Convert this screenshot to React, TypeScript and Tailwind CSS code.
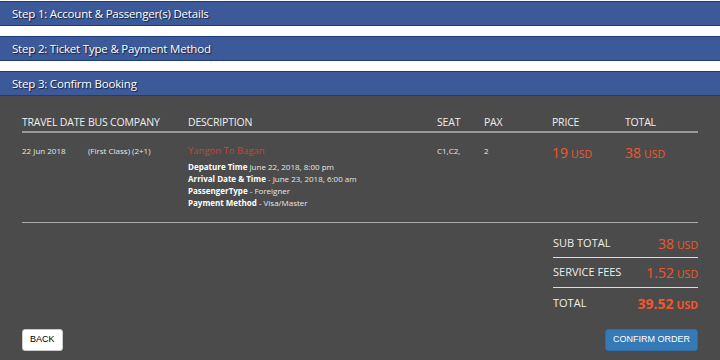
import React from "react";

const Bar = ({ label }: { label: string }) => (
  <div className="h-[25px] bg-[#3c5a99] border-y border-[#1f3b78] flex items-center pl-[12px] text-[11.5px] tracking-[-0.2px] text-white [text-shadow:1px_1px_1px_rgba(0,0,0,0.7)]">
    {label}
  </div>
);

const Money = ({ n, bold = false }: { n: string; bold?: boolean }) => (
  <span className={`text-[#f0582b] ${bold ? "font-bold" : ""}`}>
    <span className="text-[14px]">{n}</span>
    <span className="text-[10.5px] ml-[3px]">USD</span>
  </span>
);

export default function App() {
  return (
    <div className="w-[720px] h-[360px] overflow-hidden bg-white" style={{ fontFamily: '"Open Sans", "Noto Sans", sans-serif' }}>
      <div className="pt-[1px]">
        <Bar label="Step 1: Account & Passenger(s) Details" />
        <div className="h-[10px]" />
        <Bar label="Step 2: Ticket Type & Payment Method" />
        <div className="h-[10px]" />
        <Bar label="Step 3: Confirm Booking" />
      </div>
      <div className="bg-[#4b4b4b] h-[265px] px-[22px] pt-[18px] text-[#eeeeee]">
        <div className="grid grid-cols-[66px_100px_249px_47px_68px_73px_73px] text-[10.5px] leading-[16px] border-b-2 border-[#999999] pb-[1px] tracking-[-0.2px]">
          <div className="whitespace-nowrap">TRAVEL DATE</div>
          <div>BUS COMPANY</div>
          <div>DESCRIPTION</div>
          <div>SEAT</div>
          <div>PAX</div>
          <div>PRICE</div>
          <div>TOTAL</div>
        </div>
        <div className="grid grid-cols-[66px_100px_249px_47px_68px_73px_73px] text-[8px] leading-[12px] pt-[12px] pb-[13px] border-b border-[#aaaaaa] text-[#e6e6e6]">
          <div>22 Jun 2018</div>
          <div>(First Class) (2+1)</div>
          <div>
            <div className="text-[#c8452d] text-[9.5px] mb-[4px]">Yangon To Bagan</div>
            <div><span className="font-bold text-white">Depature Time</span> June 22, 2018, 8:00 pm</div>
            <div><span className="font-bold text-white">Arrival Date &amp; Time</span> - June 23, 2018, 6:00 am</div>
            <div><span className="font-bold text-white">PassengerType</span> - Foreigner</div>
            <div><span className="font-bold text-white">Payment Method</span> - Visa/Master</div>
          </div>
          <div>C1,C2,</div>
          <div>2</div>
          <div className="pt-[2px]"><Money n="19" /></div>
          <div className="pt-[2px]"><Money n="38" /></div>
        </div>
        <div className="flex justify-end pt-[6px]">
          <div className="w-[145px] text-[11px]">
            <div className="flex justify-between items-center h-[29px] border-b border-[#dddddd]">
              <span>SUB TOTAL</span>
              <Money n="38" />
            </div>
            <div className="flex justify-between items-center h-[30px] border-b border-[#dddddd]">
              <span>SERVICE FEES</span>
              <Money n="1.52" />
            </div>
            <div className="flex justify-between items-center h-[30px]">
              <span>TOTAL</span>
              <Money n="39.52" bold />
            </div>
          </div>
        </div>
        <div className="flex justify-between mt-[11px]" style={{ fontFamily: '"Liberation Sans", Arial, sans-serif' }}>
          <button className="h-[22px] px-[7px] bg-white text-black text-[9px] rounded-[3px] border border-[#cccccc]">BACK</button>
          <button className="h-[22px] px-[7px] bg-[#337ab7] text-white text-[9px] rounded-[3px] border border-[#2e6da4]">CONFIRM ORDER</button>
        </div>
      </div>
    </div>
  );
}
